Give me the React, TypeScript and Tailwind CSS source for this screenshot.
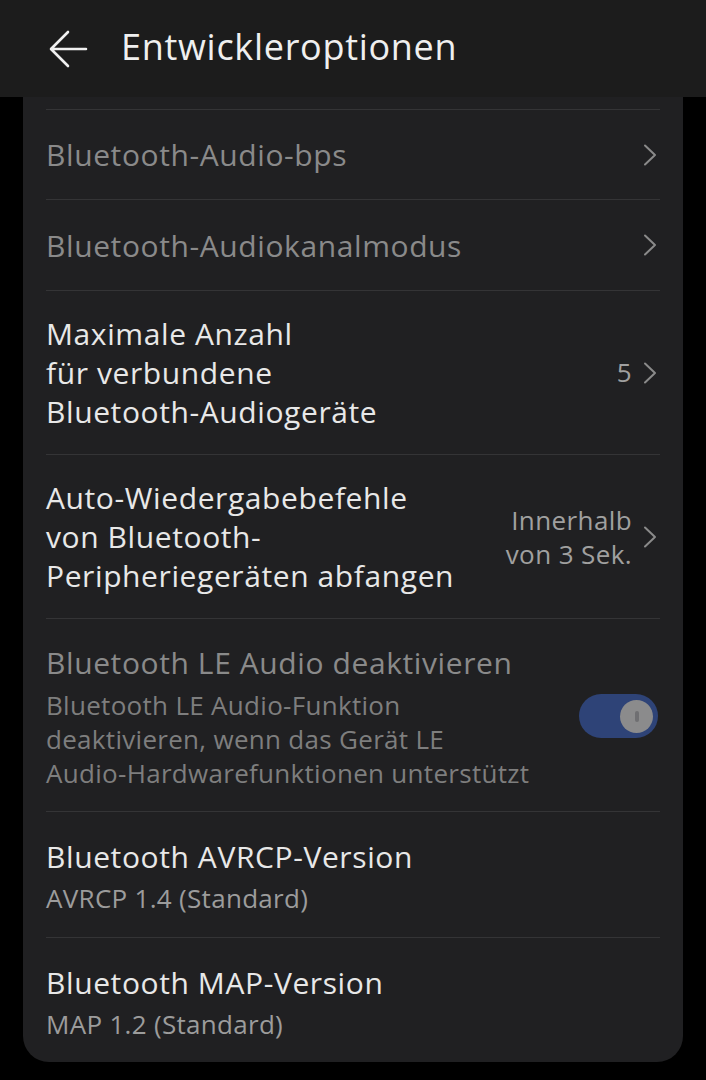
import React from "react";

// Developer options screen, Bluetooth section (dark theme).

function Chevron() {
  return (
    <svg width="16" height="26" viewBox="0 0 16 26" fill="none" className="shrink-0 mr-[2px]">
      <path d="M3 3.5 L13 13 L3 22.5" stroke="#8a8a8a" strokeWidth="2" strokeLinecap="round" strokeLinejoin="round" />
    </svg>
  );
}

function Divider() {
  return <div className="h-px bg-[#343436]" />;
}

function Toggle() {
  return (
    <div className="relative w-[79px] h-[44px] mr-[2px] rounded-full bg-[#2e4377] shrink-0">
      <div className="absolute right-[5px] top-[5.5px] w-[33px] h-[33px] rounded-full bg-[#8b8b8c] flex items-center justify-center">
        <div className="w-[4px] h-[11px] rounded-full bg-[#6f6f72]" />
      </div>
    </div>
  );
}

export default function App() {
  return (
    <div
      className="w-[706px] h-[1080px] bg-black overflow-hidden"
      style={{ fontFamily: "'Open Sans', 'Noto Sans', sans-serif" }}
    >
      {/* ── top bar ───────────────────────────────────────── */}
      <header className="h-[97px] bg-[#1c1c1c] flex items-center pl-[48px]">
        <svg width="40" height="40" viewBox="0 0 40 40" fill="none">
          <path d="M38 20 H4 M20 3 L3 20 L20 37" stroke="#f0f0f0" strokeWidth="2.6" strokeLinecap="round" strokeLinejoin="round" />
        </svg>
        <h1 className="ml-[33px] -mt-[3px] text-[36px] tracking-[0.7px] text-[#efefef] font-medium">Entwickleroptionen</h1>
      </header>

      {/* ── settings card ─────────────────────────────────── */}
      <div className="mx-[23px] bg-[#202022] rounded-b-[26px] px-[23px] pt-[12px] tracking-[0.6px]">
        <Divider />

        <div className="h-[89px] flex items-center justify-between">
          <span className="text-[30px] text-[#8a8a8a]">Bluetooth-Audio-bps</span>
          <Chevron />
        </div>
        <Divider />

        <div className="h-[90px] flex items-center justify-between">
          <span className="text-[30px] text-[#8a8a8a]">Bluetooth-Audiokanalmodus</span>
          <Chevron />
        </div>
        <Divider />

        <div className="h-[163px] flex items-center justify-between">
          <span className="text-[30px] leading-[39px] text-[#e8e8e8]">
            Maximale Anzahl
            <br />
            für verbundene
            <br />
            Bluetooth-Audiogeräte
          </span>
          <div className="flex items-center gap-[10px]">
            <span className="text-[26px] tracking-[0.3px] text-[#a0a0a0]">5</span>
            <Chevron />
          </div>
        </div>
        <Divider />

        <div className="h-[163px] flex items-center justify-between">
          <span className="text-[30px] leading-[39px] text-[#e8e8e8]">
            Auto-Wiedergabebefehle
            <br />
            von Bluetooth-
            <br />
            Peripheriegeräten abfangen
          </span>
          <div className="flex items-center gap-[10px]">
            <span className="text-[26px] tracking-[0.4px] leading-[34px] text-[#a0a0a0] text-right">
              Innerhalb
              <br />
              von 3 Sek.
            </span>
            <Chevron />
          </div>
        </div>
        <Divider />

        <div className="h-[192px] flex items-center justify-between pt-[2px]">
          <div>
            <p className="text-[30px] leading-[39px] text-[#8a8a8a]">Bluetooth LE Audio deaktivieren</p>
            <p className="mt-[6px] text-[26px] tracking-[0.3px] leading-[34px] text-[#7e7e7e]">
              Bluetooth LE Audio-Funktion
              <br />
              deaktivieren, wenn das Gerät LE
              <br />
              Audio-Hardwarefunktionen unterstützt
            </p>
          </div>
          <Toggle />
        </div>
        <Divider />

        <div className="pt-[25px] pb-[22px]">
          <p className="text-[30px] leading-[39px] text-[#e8e8e8]">Bluetooth AVRCP-Version</p>
          <p className="mt-[5px] text-[26px] tracking-[0.3px] leading-[34px] text-[#9c9c9c]">AVRCP 1.4 (Standard)</p>
        </div>
        <Divider />

        <div className="pt-[25px] pb-[21px]">
          <p className="text-[30px] leading-[39px] text-[#e8e8e8]">Bluetooth MAP-Version</p>
          <p className="mt-[5px] text-[26px] tracking-[0.3px] leading-[34px] text-[#9c9c9c]">MAP 1.2 (Standard)</p>
        </div>
      </div>
    </div>
  );
}
